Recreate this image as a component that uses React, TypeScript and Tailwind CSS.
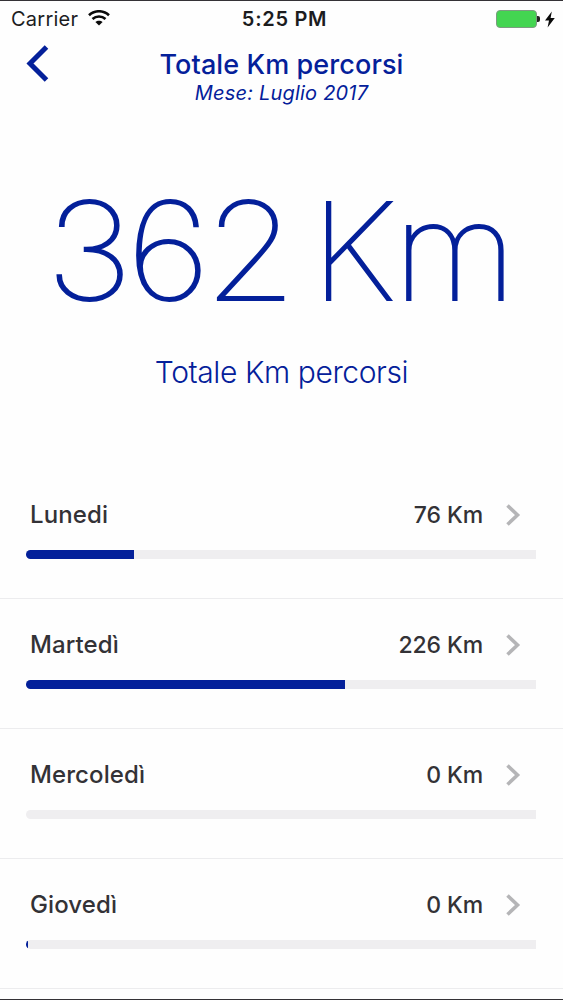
import React from "react";

type Day = {
  name: string;
  km: number;
  percent: number;
};

const days: Day[] = [
  { name: "Lunedi", km: 76, percent: 21.1 },
  { name: "Martedì", km: 226, percent: 62.5 },
  { name: "Mercoledì", km: 0, percent: 0 },
  { name: "Giovedì", km: 0, percent: 0.4 },
];

const StatusBar: React.FC = () => {
  return (
    <div className="grid h-[36px] grid-cols-[1fr_auto_1fr] items-center pl-[11px] pr-[8px] text-[20px] leading-[36px] text-[#1c1c1e]">
      <div className="flex items-center gap-[10px]">
        <span className="tracking-[0.25px]">Carrier</span>
        <svg className="-mt-[2px]" width="22" height="16" viewBox="0 0 22 16" fill="none" stroke="#0a0a0a" strokeWidth="2.6">
          <path d="M1 5.3C6.7 -0.1 15.3 -0.1 21 5.3" />
          <path d="M4.5 9C8.2 5.6 13.8 5.6 17.5 9" />
          <path d="M11 15.6L7.4 12C9.4 10.2 12.6 10.2 14.6 12Z" fill="#0a0a0a" stroke="none" />
        </svg>
      </div>
      <span className="pl-[3px] font-semibold tracking-[0.7px]">5:25 PM</span>
      <div className="flex items-center justify-end">
        <div className="h-[18px] w-[41px] rounded-[4px] border border-[#7c9c80] bg-[#43d551]" />
        <div className="h-[6px] w-[3px] rounded-r-[2px] bg-[#222]" />
        <svg className="ml-[5px]" width="10" height="17" viewBox="0 0 10 17" fill="#0a0a0a">
          <path d="M6.8 0.5L0 9.6H4L2.6 16.5L9.8 6.9H5.6Z" />
        </svg>
      </div>
    </div>
  );
};

const DayRow: React.FC<{ day: Day }> = ({ day }) => {
  return (
    <li className="h-[130px] border-b border-[#ececee] pl-[26px] pr-[27px] pt-[30px]">
      <div className="flex h-[32px] items-center pl-[4px] pr-[15px] text-[24px] font-medium text-[#333236]">
        <span className="flex-1 tracking-[0.1px]">{day.name}</span>
        <span className="text-[23px] tracking-[-0.1px]">{day.km} Km</span>
        <svg className="ml-[23px]" width="15" height="22" viewBox="0 0 15 22" fill="none" stroke="#b5b5b7" strokeWidth="3.6">
          <path d="M1.5 1.5L11.5 11L1.5 20.5" />
        </svg>
      </div>
      <div className="mt-[19px] h-[9px] overflow-hidden rounded-l-full rounded-r-[1px] bg-[#efeef0]">
        <div className="h-full bg-[#04209a]" style={{ width: `${day.percent}%` }} />
      </div>
    </li>
  );
};

const App: React.FC = () => {
  return (
    <div className="flex h-[1000px] w-[563px] flex-col overflow-hidden border-y border-[#343236] bg-[#fefefe] font-['Inter',sans-serif]">
      <StatusBar />

      <header className="grid h-[70px] grid-cols-[60px_1fr_60px] text-center text-[#04209a]">
        <button type="button" className="flex items-start pl-[26px] pt-[8px]">
          <svg width="24" height="37" viewBox="0 0 24 37" fill="none" stroke="#04209a" strokeWidth="5">
            <path d="M20.5 2L4 18.5L20.5 35" />
          </svg>
        </button>
        <div className="pt-[12px]">
          <h1 className="text-[27px] font-medium leading-[32px] tracking-[0.1px]">Totale Km percorsi</h1>
          <p className="text-[20px] italic leading-[24px] tracking-[0.2px]">Mese: Luglio 2017</p>
        </div>
      </header>

      <section className="flex h-[362px] flex-col pt-[62px] text-center text-[#04209a]">
        <div className="flex whitespace-nowrap pl-[46px] text-[135px] font-thin leading-[164px] [-webkit-text-stroke:2px_#04209a]">
          <span className="w-[265px] origin-left scale-x-[1.1] text-left tracking-[-5.5px]">362</span>
          <span className="origin-left scale-x-[1.05] tracking-[-2px]">Km</span>
        </div>
        <div className="mt-[21px] text-[30px] font-light leading-[36px] tracking-[-0.4px]">Totale Km percorsi</div>
      </section>

      <ul>
        {days.map((day) => (
          <DayRow key={day.name} day={day} />
        ))}
      </ul>
    </div>
  );
};

export default App;
